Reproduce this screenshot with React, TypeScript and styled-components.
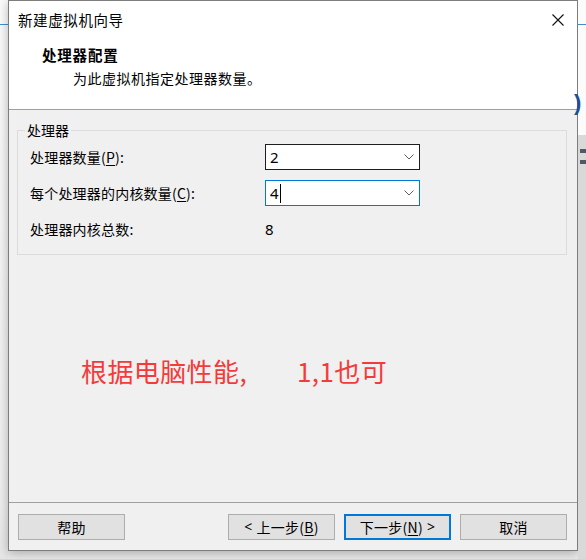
import React from 'react';
import styled, { createGlobalStyle } from 'styled-components';

const Global = createGlobalStyle`
  html, body { margin: 0; padding: 0; }
  body {
    width: 586px;
    height: 559px;
    overflow: hidden;
    background: #e9e9e9;
    font-family: "Noto Sans CJK SC", "Noto Sans", sans-serif;
    color: #000;
  }
`;

const Desktop = styled.div`
  display: flex;
  width: 586px;
  height: 559px;
  overflow: hidden;
`;

const LeftStrip = styled.div`
  width: 8px;
  flex-shrink: 0;
  display: flex;
  flex-direction: column;
  background: linear-gradient(#fafafa, #eeeeee 90%, #e6e6e6);
`;

const RightStrip = styled.div`
  flex: 1;
  display: flex;
  flex-direction: column;
  background: #e6e6e6;
`;

const StripTop = styled.div<{ $h: number }>`
  height: ${p => p.$h}px;
  flex-shrink: 0;
  background: #fbfbfb;
  border-bottom: 1px solid #3f8fd0;
`;

const StripMid = styled.div<{ $h: number }>`
  height: ${p => p.$h}px;
  flex-shrink: 0;
  background: #fbfbfb;
  display: flex;
  align-items: flex-start;
  padding-top: 66px;
  box-sizing: border-box;
`;

const StripGrey = styled.div`
  flex: 1;
  background: #d9d9d9;
  display: flex;
  flex-direction: column;
  gap: 7px;
  padding-top: 14px;
`;

const BlueParen = styled.span`
  font-family: "Liberation Sans", sans-serif;
  font-size: 22px;
  line-height: 24px;
  font-weight: 700;
  color: #1f4e99;
  margin-left: -4px;
`;

const DarkMark = styled.span<{ $w: number }>`
  display: block;
  width: ${p => p.$w}px;
  height: 4px;
  background: #4d5a68;
  margin-left: 2px;
`;

const Dialog = styled.div`
  width: 570px;
  height: 551px;
  flex-shrink: 0;
  box-sizing: border-box;
  border: 1px solid #7d7d7d;
  background: #f0f0f0;
  display: flex;
  flex-direction: column;
  box-shadow: 0 2px 10px rgba(0, 0, 0, 0.28);
`;

const Header = styled.div`
  height: 108px;
  background: #fff;
  border-bottom: 1px solid #a0a0a0;
  display: flex;
  flex-direction: column;
`;

const TitleBar = styled.div`
  height: 38px;
  display: flex;
  align-items: center;
  justify-content: space-between;
  padding: 0 13px 0 9px;
`;

const TitleText = styled.span`
  font-size: 14.5px;
  line-height: 20px;
  letter-spacing: 0.6px;
`;

const CloseIcon = styled.svg`
  width: 12px;
  height: 12px;
  display: block;
`;

const Heading = styled.div`
  margin-top: 6px;
  padding-left: 33px;
  font-size: 14.5px;
  line-height: 20px;
  font-weight: 700;
  letter-spacing: 0.8px;
`;

const SubHeading = styled.div`
  margin-top: 3px;
  padding-left: 64px;
  font-size: 14px;
  line-height: 20px;
  letter-spacing: 0.5px;
`;

const Body = styled.div`
  flex: 1;
  display: flex;
  flex-direction: column;
`;

const GroupBox = styled.fieldset`
  margin: 11px 10px 0 8px;
  padding: 5px 12px 12px 12px;
  border: 1px solid #dcdcdc;
  min-width: 0;
`;

const Legend = styled.legend`
  padding: 0 2px;
  margin-left: -5px;
  font-size: 14px;
  line-height: 18px;
`;

const FormGrid = styled.div`
  display: grid;
  grid-template-columns: 235px 155px;
  grid-auto-rows: 26px;
  row-gap: 10px;
  align-items: center;
`;

const Label = styled.span`
  font-size: 14px;
  line-height: 20px;
  letter-spacing: 0.2px;
`;

const Key = styled.span`
  text-decoration: underline;
  text-underline-offset: 2px;
`;

const Combo = styled.div<{ $focused?: boolean }>`
  height: 26px;
  box-sizing: border-box;
  border: 1px solid ${p => (p.$focused ? '#0078d7' : '#1e1e1e')};
  background: #fff;
  display: flex;
  align-items: center;
  padding: 0 5px 0 4px;
`;

const ComboValue = styled.span`
  flex: 1;
  display: flex;
  align-items: center;
  font-family: "Noto Sans", sans-serif;
  font-size: 15px;
  line-height: 20px;
`;

const Caret = styled.span`
  display: inline-block;
  width: 1px;
  height: 19px;
  background: #000;
  margin-left: 1px;
`;

const Chevron = styled.svg`
  width: 10px;
  height: 6px;
  display: block;
`;

const Total = styled.span`
  font-family: "Noto Sans", sans-serif;
  font-size: 15px;
  line-height: 20px;
`;

const Note = styled.div`
  margin: 101px 0 0 72px;
  display: flex;
  font-size: 26px;
  line-height: 30px;
  color: #f33b3b;
  white-space: pre;
`;

const NotePart = styled.span<{ $gap?: number }>`
  margin-left: ${p => p.$gap ?? 0}px;
  letter-spacing: 0.4px;
`;

const Footer = styled.div`
  height: 48px;
  box-sizing: border-box;
  border-top: 1px solid #a0a0a0;
  padding: 11px 10px 10px 9px;
  display: flex;
  align-items: flex-start;
`;

const Button = styled.button<{ $default?: boolean; $gap?: number }>`
  width: 107px;
  height: 26px;
  box-sizing: border-box;
  margin-left: ${p => p.$gap ?? 0}px;
  border: ${p => (p.$default ? '2px solid #0078d7' : '1px solid #adadad')};
  background: #e1e1e1;
  font-family: "Noto Sans CJK SC", "Noto Sans", sans-serif;
  font-size: 14px;
  line-height: 20px;
  color: #000;
  padding: 0;
  display: flex;
  align-items: center;
  justify-content: center;
  letter-spacing: 0.3px;
`;

const Latin = styled.span`
  font-family: "Noto Sans", sans-serif;
`;

const ChevronIcon = () => (
  <Chevron viewBox="0 0 10 6">
    <polyline points="0.5,0.5 5,5 9.5,0.5" fill="none" stroke="#5f5f5f" strokeWidth="1" />
  </Chevron>
);

export default function App() {
  return (
    <>
      <Global />
      <Desktop>
        <LeftStrip>
          <StripTop $h={24} />
        </LeftStrip>
        <Dialog>
          <Header>
            <TitleBar>
              <TitleText>新建虚拟机向导</TitleText>
              <CloseIcon viewBox="0 0 12 12">
                <path d="M0.5 0.5 L11.5 11.5 M11.5 0.5 L0.5 11.5" stroke="#111" strokeWidth="1.1" fill="none" />
              </CloseIcon>
            </TitleBar>
            <Heading>处理器配置</Heading>
            <SubHeading>为此虚拟机指定处理器数量。</SubHeading>
          </Header>
          <Body>
            <GroupBox>
              <Legend>处理器</Legend>
              <FormGrid>
                <Label>
                  处理器数量(<Key>P</Key>):
                </Label>
                <Combo>
                  <ComboValue>2</ComboValue>
                  <ChevronIcon />
                </Combo>
                <Label>
                  每个处理器的内核数量(<Key>C</Key>):
                </Label>
                <Combo $focused>
                  <ComboValue>
                    4<Caret />
                  </ComboValue>
                  <ChevronIcon />
                </Combo>
                <Label>处理器内核总数:</Label>
                <Total>8</Total>
              </FormGrid>
            </GroupBox>
            <Note>
              <NotePart>根据电脑性能,</NotePart>
              <NotePart $gap={50}>1,1也可</NotePart>
            </Note>
          </Body>
          <Footer>
            <Button>帮助</Button>
            <Button $gap={103}>
              <Latin>&lt;&nbsp;</Latin>上一步(<Key>B</Key>)
            </Button>
            <Button $gap={9} $default>
              下一步(<Key>N</Key>)<Latin>&nbsp;&gt;</Latin>
            </Button>
            <Button $gap={9}>取消</Button>
          </Footer>
        </Dialog>
        <RightStrip>
          <StripTop $h={24} />
          <StripMid $h={110}>
            <BlueParen>)</BlueParen>
          </StripMid>
          <StripGrey>
            <DarkMark $w={6} />
            <DarkMark $w={6} />
          </StripGrey>
        </RightStrip>
      </Desktop>
    </>
  );
}
